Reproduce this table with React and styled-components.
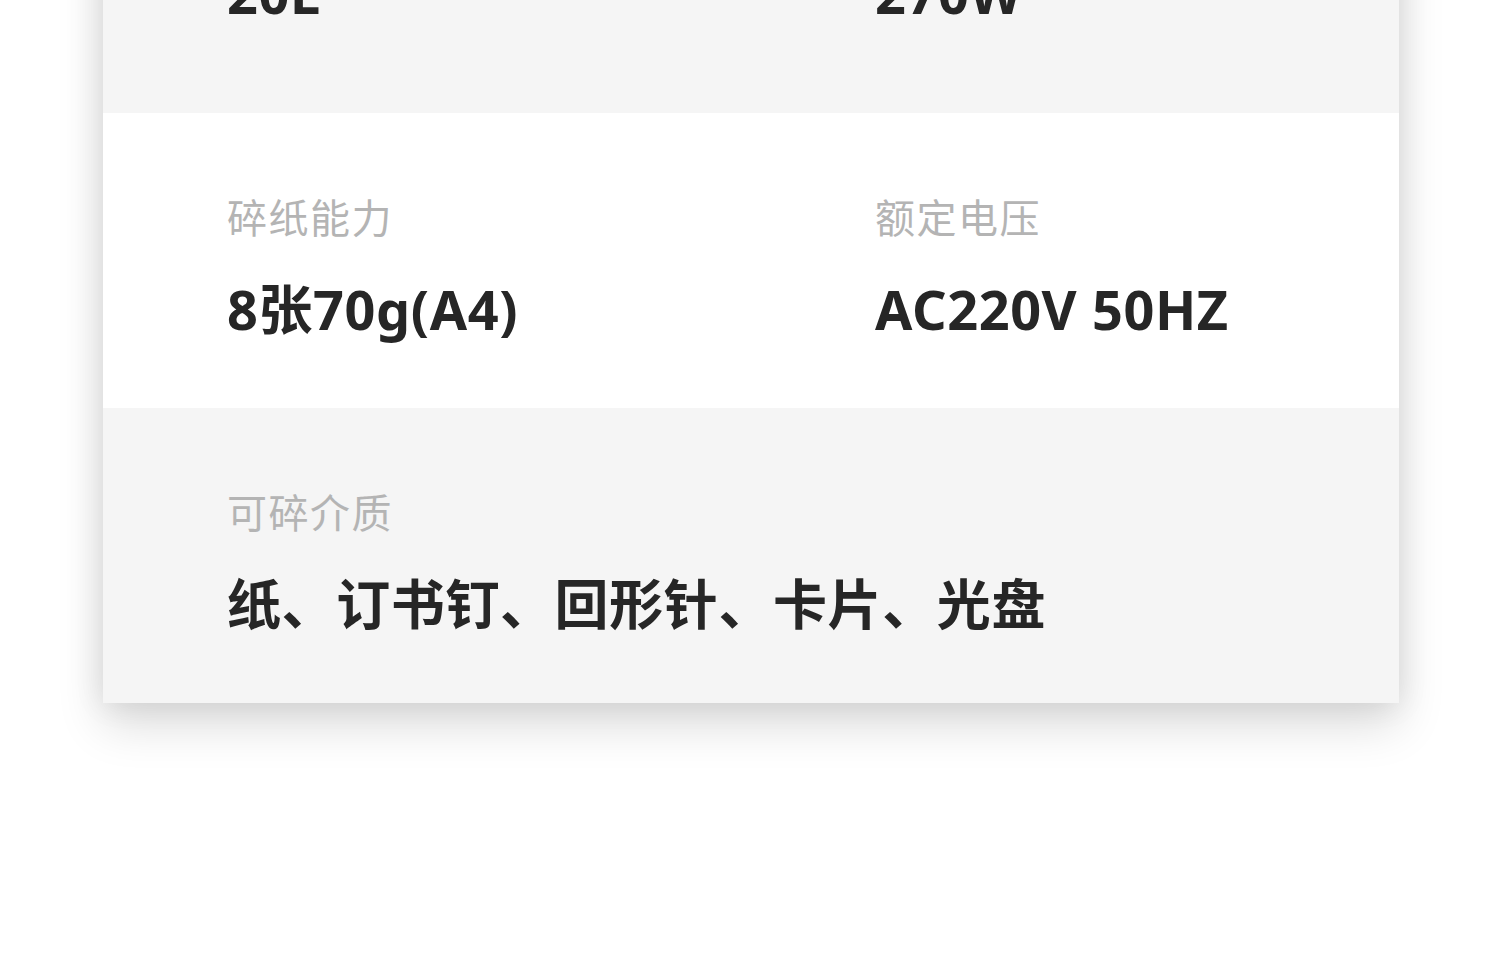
import React from 'react';
import styled, { createGlobalStyle } from 'styled-components';

const GlobalStyle = createGlobalStyle`
body {
  margin: 0;
  background: #ffffff;
  font-family: "Noto Sans", "Noto Sans CJK SC", sans-serif;
  overflow: hidden;
}
`;

const Page = styled.div`
width: 1500px;
height: 958px;
overflow: hidden;
`;

const Card = styled.div`
margin: -203px 0 0 103px;
width: 1296px;
box-shadow: 0 22px 44px rgba(0, 0, 0, 0.14), 0 0 30px rgba(0, 0, 0, 0.09);
`;

const Row = styled.div`
display: grid;
grid-template-columns: 1fr 1fr;
background: ${p => (p.shade ? '#f5f5f5' : '#ffffff')};
padding: 79px 0 ${p => 66 + (p.extra || 0)}px;
`;

const Cell = styled.div`
padding-left: 124px;
display: flex;
flex-direction: column;
gap: 37px;
`;

const Label = styled.span`
font-family: "Noto Sans CJK SC", sans-serif;
font-size: 40px;
line-height: 48px;
letter-spacing: 1.5px;
color: #b4b4b4;
`;

const Value = styled.span`
font-family: "Noto Sans", "Noto Sans CJK SC", sans-serif;
font-size: 54px;
line-height: 65px;
font-weight: 700;
letter-spacing: 0.6px;
color: #262626;
white-space: nowrap;
`;

const rows = [
    { shade: true, extra: 21, items: [{ label: '容量', value: '20L' }, { label: '功率', value: '270W' }] },
    { shade: false, items: [{ label: '碎纸能力', value: '8张70g(A4)' }, { label: '额定电压', value: 'AC220V 50HZ' }] },
    { shade: true, items: [{ label: '可碎介质', value: '纸、订书钉、回形针、卡片、光盘' }] },
];

const App = () => {
    return (
        <>
            <GlobalStyle />
            <Page>
                <Card>
                    {rows.map((row, i) =>
                        <Row key={i} shade={row.shade} extra={row.extra}>
                            {row.items.map(item =>
                                <Cell key={item.label}>
                                    <Label>{item.label}</Label>
                                    <Value>{item.value}</Value>
                                </Cell>)}
                        </Row>)}
                </Card>
            </Page>
        </>
    );
}

export default App;
